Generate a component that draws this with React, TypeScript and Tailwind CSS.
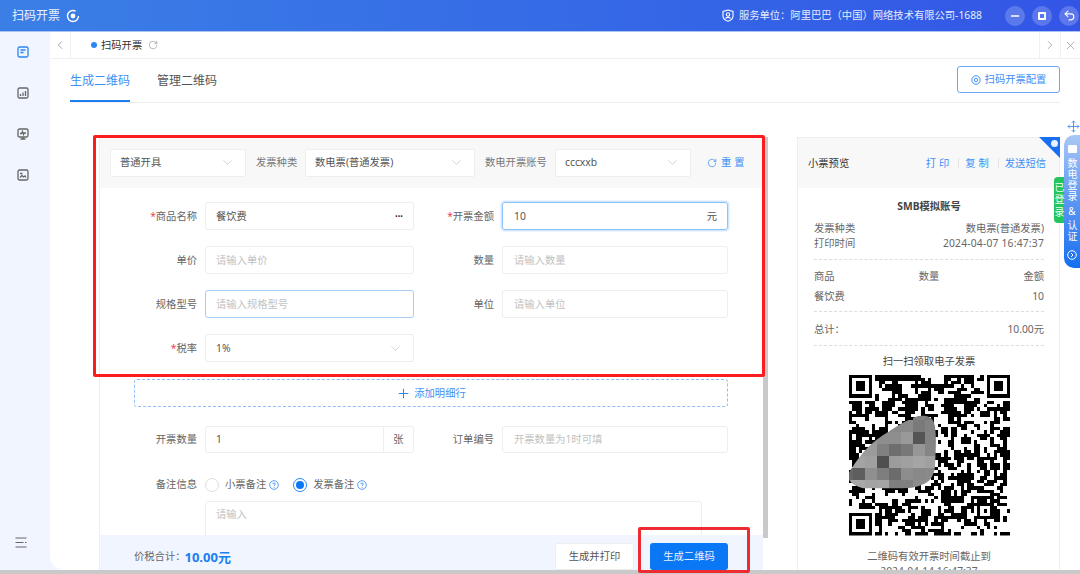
import { ChevronDown, ChevronLeft, ChevronRight, Minus, Move, Plus, RotateCw, Undo2, X } from "lucide-react";

// pseudo random modules for the qr picture
function qrPath() {
  const size = 49;
  let seed = 20240407;
  let d = "";
  const next = () => {
    seed = (seed * 1103515245 + 12345) & 0x7fffffff;
    return (seed >> 12) % 100;
  };
  const inFinder = (x: number, y: number) =>
    (x < 8 && y < 8) || (x > 40 && y < 8) || (x < 8 && y > 40) || (x > 38 && x < 44 && y > 38 && y < 44);
  const rows: boolean[][] = [];
  for (let y = 0; y < size; y++) {
    rows[y] = [];
    for (let x = 0; x < size; x++) {
      const pick = next();
      let on = next() < 52;
      if (pick < 22 && x > 0) on = rows[y][x - 1];
      else if (pick < 44 && y > 0) on = rows[y - 1][x];
      rows[y][x] = on;
      if (!inFinder(x, y) && on) d += `M${x} ${y}h1v1h-1z`;
    }
  }
  const finder = (x: number, y: number) =>
    `M${x} ${y}h7v1h-7zM${x} ${y + 6}h7v1h-7zM${x} ${y + 1}h1v5h-1zM${x + 6} ${y + 1}h1v5h-1zM${x + 2} ${y + 2}h3v3h-3z`;
  const align = "M39 39h5v1h-5zM39 43h5v1h-5zM39 40h1v3h-1zM43 40h1v3h-1zM41 41h1v1h-1z";
  return d + finder(0, 0) + finder(42, 0) + finder(0, 42) + align;
}

const mosaicRows: [number, (string | null)[]][] = [
  [33, [null, null, null, null, null, null, "#808080", "#787878"]],
  [45, [null, null, null, null, "#8a8a8a", "#8a8a8a", "#7a7a7a", "#828282"]],
  [57, [null, null, "#969696", "#8e8e8e", "#8e8e8e", "#999999", "#555555", "#838383"]],
  [69, [null, "#9a9a9a", "#9a9a9a", "#808080", "#6e6e6e", "#787878", "#979797", "#858585"]],
  [81, ["#a3a3a3", "#a3a3a3", "#a0a0a0", "#4f4f4f", "#9c9c9c", "#a0a0a0", "#a5a5a5", "#a0a0a0"]],
  [93, ["#666666", "#5e5e5e", "#8f8f8f", "#7e7e7e", "#6c6c6c", "#8d8d8d", "#888888", "#8a8a8a"]],
  [105, ["#a8a8a8", "#a8a8a8", "#a3a3a3", "#a5a5a5", "#7f7f7f", "#808080", "#8c8c8c", "#909090"]],
];

function QrCode() {
  return (
    <svg viewBox="0 0 161 161" className="w-[161px] h-[162px] block">
      <svg viewBox="0 0 49 49" width="161" height="161" shapeRendering="crispEdges">
        <path d={qrPath()} fill="#000" />
      </svg>
      <clipPath id="blob">
        <path d="M0 98C8 85 18 72 28 65C42 55 55 47 65 43C72 40 80 40 84 46C88 54 87 70 86 92C85 100 82 106 76 109C68 113 60 114 52 114L15 114C8 112 3 110 0 105Z" />
      </clipPath>
      <g clipPath="url(#blob)" shapeRendering="crispEdges">
        {mosaicRows.map(([y, cells]) =>
          cells.map((c, i) =>
            c ? <rect key={`${y}-${i}`} x={-8 + i * 12} y={y} width="12" height="12" fill={c} /> : null
          )
        )}
      </g>
    </svg>
  );
}

function SelectBox({ text, className }: { text: string; className: string }) {
  return (
    <div className={`h-[28px] bg-white border border-[#eeeeee] rounded-[2px] flex items-center justify-between pr-[10px] text-[#555555] ${className}`}>
      <span>{text}</span>
      <ChevronDown size={15} strokeWidth={1} className="text-[#b5b5b5]" />
    </div>
  );
}

function Label({ text, required, className }: { text: string; required?: boolean; className: string }) {
  return (
    <div className={`shrink-0 text-right pr-[8px] text-[#666666] ${className}`}>
      {required && <span className="text-[#f0445a]">*</span>}
      {text}
    </div>
  );
}

function TextBox({ text, placeholder, className }: { text?: string; placeholder?: string; className: string }) {
  return (
    <div className={`h-[28px] rounded-[3px] flex items-center ${placeholder ? "text-[#c2c2c2]" : "text-[#555555]"} ${className}`}>
      {text || placeholder}
    </div>
  );
}

function Help() {
  return (
    <svg width="10" height="10" viewBox="0 0 10 10" className="ml-[3px]">
      <circle cx="5" cy="5" r="4.3" fill="none" stroke="#2f86f0" strokeWidth="0.8" />
      <path d="M3.7 4C3.8 2.6 6.3 2.6 6.3 4C6.3 5 5 4.9 5 6" fill="none" stroke="#2f86f0" strokeWidth="0.8" />
      <circle cx="5" cy="7.2" r="0.5" fill="#2f86f0" />
    </svg>
  );
}

function SideIcon({ active, children, height = 10 }: { active?: boolean; children: React.ReactNode; height?: number }) {
  return (
    <svg width="12" height="12" viewBox="0 0 12 12" fill="none" stroke={active ? "#2b86f5" : "#666666"} strokeWidth="1.3">
      <rect x="1" y="1" width="10" height={height} rx="1.5" />
      {children}
    </svg>
  );
}

function ReceiptRow({ left, right }: { left: string; right: string }) {
  return (
    <div className="flex justify-between h-[15px] leading-[15px]">
      <span>{left}</span>
      <span>{right}</span>
    </div>
  );
}

export default function App() {
  return (
    <div className="relative w-[1080px] h-[574px] overflow-hidden flex flex-col bg-white text-[10.3px] leading-[15px] font-['Noto_Sans','Noto_Sans_CJK_SC',sans-serif]">
      <header className="h-[32px] shrink-0 flex items-center bg-gradient-to-r from-[#3b7fe6] to-[#3355e6] border-b border-[#a9c3f5] pl-[12px] text-white">
        <span className="text-[12px] opacity-90">扫码开票</span>
        <svg width="14" height="14" viewBox="0 0 14 14" className="ml-[6px]">
          <circle cx="7" cy="7" r="5.5" fill="none" stroke="#fff" strokeWidth="1.4" strokeDasharray="28 6" />
          <circle cx="7" cy="7" r="2.4" fill="#fff" />
        </svg>
        <div className="ml-auto flex items-center gap-[5px] text-[#e4ebfb]">
          <svg width="12" height="13" viewBox="0 0 12 13" fill="none" stroke="#fff" strokeWidth="1.1">
            <path d="M6 1L11 2.5V7C11 9.5 8.5 11.5 6 12.2C3.5 11.5 1 9.5 1 7V2.5Z" />
            <circle cx="6" cy="5.5" r="1.7" />
            <path d="M3.5 9.5C4 8 8 8 8.500 9.500" />
          </svg>
          <span>服务单位：阿里巴巴（中国）网络技术有限公司-1688</span>
        </div>
        <div className="ml-[23px] mr-[1px] flex items-center gap-[7px]">
          <div className="w-[20px] h-[20px] rounded-full bg-white/20 flex items-center justify-center">
            <Minus size={12} strokeWidth={3} />
          </div>
          <div className="w-[20px] h-[20px] rounded-full bg-white/20 flex items-center justify-center">
            <div className="w-[8px] h-[8px] border-2 border-white rounded-[1px]" />
          </div>
          <div className="w-[20px] h-[20px] rounded-full bg-white/20 flex items-center justify-center">
            <Undo2 size={13} strokeWidth={2} />
          </div>
        </div>
      </header>

      <div className="flex-1 min-h-0 flex bg-[#f0f5ff]">
        <aside className="w-[50px] shrink-0 flex flex-col">
          <div className="w-[46px] flex flex-col items-center gap-[29px] pt-[14px]">
            <SideIcon active>
              <path d="M3.5 4H8.500M3.5 6.500H6.500" />
            </SideIcon>
            <SideIcon>
              <path d="M3.500 9V7M6 9V5.500M8.500 9V4" />
            </SideIcon>
            <SideIcon height={8}>
              <path d="M3 5.500H4.500L5.500 3.500L6.500 6.500L7.200 5H9M3.500 11H8.500M6 9V11" />
            </SideIcon>
            <SideIcon>
              <path d="M3 4.500H5.500M3 8.500L5 6.500L6.500 8L8 7L9 8.500" />
            </SideIcon>
          </div>
          <svg width="12" height="11" viewBox="0 0 12 11" className="mt-auto mb-[22px] ml-[15px]" fill="none" stroke="#666666" strokeWidth="1.200">
            <path d="M0.500 1H11.500M0.500 5.500H8.500M10 5.500H11.500M0.500 10H11.500" />
          </svg>
        </aside>

        <main className="flex-1 min-w-0 bg-white rounded-tl-[3px] rounded-bl-[14px] flex flex-col">
          <div className="h-[27px] shrink-0 flex items-center border-b border-[#f0f0f0] text-[#333333]">
            <div className="w-[21px] h-full flex items-center justify-center border-r border-[#f0f0f0] text-[#888888]">
              <ChevronLeft size={14} strokeWidth={1.2} />
            </div>
            <span className="ml-[20px] w-[6px] h-[6px] rounded-full bg-[#2b86f5]" />
            <span className="ml-[4px]">扫码开票</span>
            <RotateCw size={10} strokeWidth={1.2} className="ml-[6px] text-[#777777]" />
            <div className="ml-auto w-[21px] h-full flex items-center justify-center border-l border-[#f0f0f0] text-[#888888]">
              <ChevronRight size={14} strokeWidth={1.2} />
            </div>
            <div className="w-[20px] h-full flex items-center justify-center border-l border-[#f0f0f0] text-[#888888]">
              <X size={13} strokeWidth={1.2} />
            </div>
          </div>

          <div className="mx-[20px] h-[44px] shrink-0 flex border-b border-[#eeeeee] text-[12px]">
            <div className="relative h-full w-[60px] pt-[14px] text-[#3e8ff5] border-b-2 border-[#1a7ff0]">生成二维码</div>
            <div className="ml-[27px] pt-[14px] text-[#555555]">管理二维码</div>
            <div className="ml-auto mt-[7px] w-[103px] h-[27px] rounded-[3px] border border-[#6aa8f7] flex items-center justify-center gap-[4px] text-[10.3px] text-[#3e8ff5]">
              <svg width="10" height="10" viewBox="0 0 10 10" fill="none" stroke="#3e8ff5" strokeWidth="1">
                <circle cx="5" cy="5" r="4.200" />
                <circle cx="5" cy="5" r="1.700" />
              </svg>
              扫码开票配置
            </div>
          </div>

          <div className="flex-1 min-h-0 flex pt-[34px] pl-[49px]">
            <section className="w-[664px] shrink-0 flex flex-col border-l border-[#eeeeee]">
              <div className="flex-1 min-h-0 overflow-hidden">
                <div className="h-[51px] bg-[#f8f8f8] flex items-center pl-[10px] text-[#777777]">
                  <SelectBox text="普通开具" className="w-[136px] pl-[9px]" />
                  <span className="ml-[10px] w-[41px] whitespace-nowrap">发票种类</span>
                  <SelectBox text="数电票(普通发票)" className="ml-[8px] w-[170px] pl-[9px]" />
                  <span className="ml-[10px] w-[62px] whitespace-nowrap">数电开票账号</span>
                  <SelectBox text="cccxxb" className="ml-[8px] w-[136px] pl-[9px]" />
                  <RotateCw size={10} strokeWidth={1.600} className="ml-[16px] text-[#2b86f5]" />
                  <span className="ml-[4px] text-[#3e8ff5] tracking-[3px]">重置</span>
                </div>

                <div className="pt-[14px] flex flex-col gap-[16px]">
                  <div className="flex items-center">
                    <Label text="商品名称" required className="w-[105px]" />
                    <div className="w-[209px] h-[28px] border border-[#eeeeee] rounded-[3px] flex items-center justify-between px-[10px] text-[#555555]">
                      餐饮费
                      <span className="text-[7px] text-[#333333]">•••</span>
                    </div>
                    <Label text="开票金额" required className="w-[88px]" />
                    <div className="w-[226px] h-[28px] border border-[#8cc4fb] rounded-[3px] shadow-[0_0_2px_1px_#bcdcfd] flex items-center justify-between pl-[11px] pr-[10px] text-[#555555]">
                      10
                      <span>元</span>
                    </div>
                  </div>
                  <div className="flex items-center">
                    <Label text="单价" className="w-[105px]" />
                    <TextBox placeholder="请输入单价" className="w-[209px] border border-[#eeeeee] pl-[10px]" />
                    <Label text="数量" className="w-[88px]" />
                    <TextBox placeholder="请输入数量" className="w-[226px] border border-[#eeeeee] pl-[11px]" />
                  </div>
                  <div className="flex items-center">
                    <Label text="规格型号" className="w-[105px]" />
                    <TextBox placeholder="请输入规格型号" className="w-[209px] border border-[#a5cdf8] pl-[10px]" />
                    <Label text="单位" className="w-[88px]" />
                    <TextBox placeholder="请输入单位" className="w-[226px] border border-[#eeeeee] pl-[11px]" />
                  </div>
                  <div className="flex items-center">
                    <Label text="税率" required className="w-[105px]" />
                    <SelectBox text="1%" className="w-[209px] pl-[10px]" />
                  </div>
                </div>

                <div className="mt-[17px] ml-[34px] w-[594px] h-[28px] border border-dashed border-[#8fbdf8] rounded-[3px] flex items-center justify-center gap-[3px] text-[#3e8ff5]">
                  <Plus size={15} strokeWidth={1.600} className="text-[#2b86f5]" />
                  添加明细行
                </div>

                <div className="mt-[19px] flex items-center">
                  <Label text="开票数量" className="w-[105px]" />
                  <div className="w-[209px] h-[27px] border border-[#eeeeee] rounded-[3px] flex items-center text-[#555555]">
                    <span className="flex-1 px-[10px]">1</span>
                    <span className="w-[30px] h-full border-l border-[#eeeeee] flex items-center justify-center text-[#666666]">张</span>
                  </div>
                  <Label text="订单编号" className="w-[88px]" />
                  <TextBox placeholder="开票数量为1时可填" className="w-[226px] !h-[27px] border border-[#eeeeee] pl-[11px]" />
                </div>

                <div className="mt-[24px] flex items-center text-[#666666]">
                  <Label text="备注信息" className="w-[105px]" />
                  <span className="w-[14px] h-[14px] rounded-full border border-[#dddddd]" />
                  <span className="ml-[6px]">小票备注</span>
                  <Help />
                  <span className="ml-[14px] w-[14px] h-[14px] rounded-full border border-[#2b86f5] flex items-center justify-center">
                    <span className="w-[8px] h-[8px] rounded-full bg-[#0a78f5]" />
                  </span>
                  <span className="ml-[6px]">发票备注</span>
                  <Help />
                </div>

                <div className="mt-[9px] ml-[105px] w-[497px] h-[60px] border border-[#eeeeee] rounded-[3px] px-[10px] pt-[5px] text-[#c2c2c2]">
                  请输入
                </div>
              </div>

              <div className="h-[35px] shrink-0 bg-[#f0f5ff] flex items-end pl-[34px] pb-0">
                <span className="mb-[6px] text-[#666666]">价税合计：</span>
                <span className="mb-[5px] -ml-[1px] text-[13px] font-bold text-[#1a7ff0]">10.00元</span>
                <div className="ml-auto w-[79px] h-[27px] bg-white border border-[#eeeeee] rounded-[3px] flex items-center justify-center text-[#555555]">
                  生成并打印
                </div>
                <div className="ml-[16px] mr-[35px] w-[78px] h-[27px] bg-[#0a78f5] rounded-[3px] flex items-center justify-center text-[#e8f2ff]">
                  生成二维码
                </div>
              </div>
            </section>

            <div className="w-[5px] h-[401px] shrink-0 bg-[#c9c9c9]" />

            <section className="relative ml-[29px] w-[263px] shrink-0 border-x border-t border-[#eeeeee] overflow-hidden text-[#666666]">
              <div className="h-[50px] bg-[#f8f8f8] flex items-center justify-between pl-[10px] pr-[13px]">
                <span className="text-[#333333]">小票预览</span>
                <div className="flex items-center text-[#3e8ff5]">
                  <span className="tracking-[3px]">打印</span>
                  <span className="mx-[6px] w-px h-[10px] bg-[#e4e4e4]" />
                  <span className="tracking-[3px]">复制</span>
                  <span className="mx-[6px] w-px h-[10px] bg-[#e4e4e4]" />
                  <span>发送短信</span>
                </div>
              </div>
              <div className="pl-[16px] pr-[15px]">
                <div className="mt-[11px] text-center font-bold text-[#444444]">SMB模拟账号</div>
                <div className="mt-[7px]">
                  <ReceiptRow left="发票种类" right="数电票(普通发票)" />
                  <div className="flex justify-between h-[15px]">
                    <span>打印时间</span>
                    <span className="tracking-[0.2px]">2024-04-07 16:47:37</span>
                  </div>
                </div>
                <div className="mt-[8px] border-t border-dashed border-[#dddddd]" />
                <div className="mt-[9px] flex justify-between">
                  <span>商品</span>
                  <span>数量</span>
                  <span>金额</span>
                </div>
                <div className="mt-[5px]">
                  <ReceiptRow left="餐饮费" right="10" />
                </div>
                <div className="mt-[7px] border-t border-dashed border-[#dddddd]" />
                <div className="mt-[10px]">
                  <ReceiptRow left="总计：" right="10.00元" />
                </div>
                <div className="mt-[8px] border-t border-dashed border-[#dddddd]" />
                <div className="mt-[8px] text-center text-[#444444]">扫一扫领取电子发票</div>
                <div className="mt-[5px] flex justify-center">
                  <QrCode />
                </div>
                <div className="mt-[13px] text-center">二维码有效开票时间截止到</div>
                <div className="text-center">2024-04-14 16:47:37</div>
              </div>
            </section>
          </div>
        </main>
      </div>
      <div className="h-[4px] shrink-0 bg-[#c9c9c9]" />

      {/* annotations and floating bits */}
      <div className="absolute left-[93px] top-[135px] w-[672px] h-[242px] border-[3px] border-[#fb1d1d] rounded-[2px]" />
      <div className="absolute left-[638px] top-[527px] w-[112px] h-[46px] border-[3px] border-[#ee2b30] rounded-[2px]" />

      <div className="absolute left-[1039px] top-[137px] w-[21px] h-[21px] bg-[#1a6ff0] [clip-path:polygon(0_0,100%_0,100%_100%)]">
        <span className="absolute right-[2px] top-[3px] w-[7px] h-[7px] rounded-full bg-[#e8f2ff]" />
      </div>
      <Move size={13} strokeWidth={1.400} className="absolute left-[1067px] top-[120px] text-[#2b7ff0]" />
      <div className="absolute left-[1064px] top-[135px] w-[16px] h-[133px] rounded-l-[10px] bg-gradient-to-b from-[#a9c7f6] via-[#5a96f2] to-[#0f6ff2] flex flex-col items-center pt-[10px] text-[10px] text-white">
        <span className="w-[9px] h-[8px] rounded-[1px] bg-white" />
        <span className="mt-[5px] [writing-mode:vertical-rl] leading-[12px] tracking-[1px]">数电登录</span>
        <span className="mt-[3px] leading-[12px]">&amp;</span>
        <span className="mt-[3px] [writing-mode:vertical-rl] leading-[12px] tracking-[1px]">认证</span>
        <svg width="10" height="10" viewBox="0 0 10 10" className="mt-[8px]" fill="none" stroke="#fff" strokeWidth="1">
          <circle cx="5" cy="5" r="4.300" />
          <path d="M4 3L6 5L4 7" />
        </svg>
      </div>
      <div className="absolute left-[1054px] top-[177px] w-[10px] h-[46px] rounded-l-[4px] bg-[#22c55e] flex justify-center pt-[5px] text-[10px] text-[#e8fff0]">
        <span className="[writing-mode:vertical-rl] leading-[10px] tracking-[2.500px]">已登录</span>
      </div>
    </div>
  );
}
